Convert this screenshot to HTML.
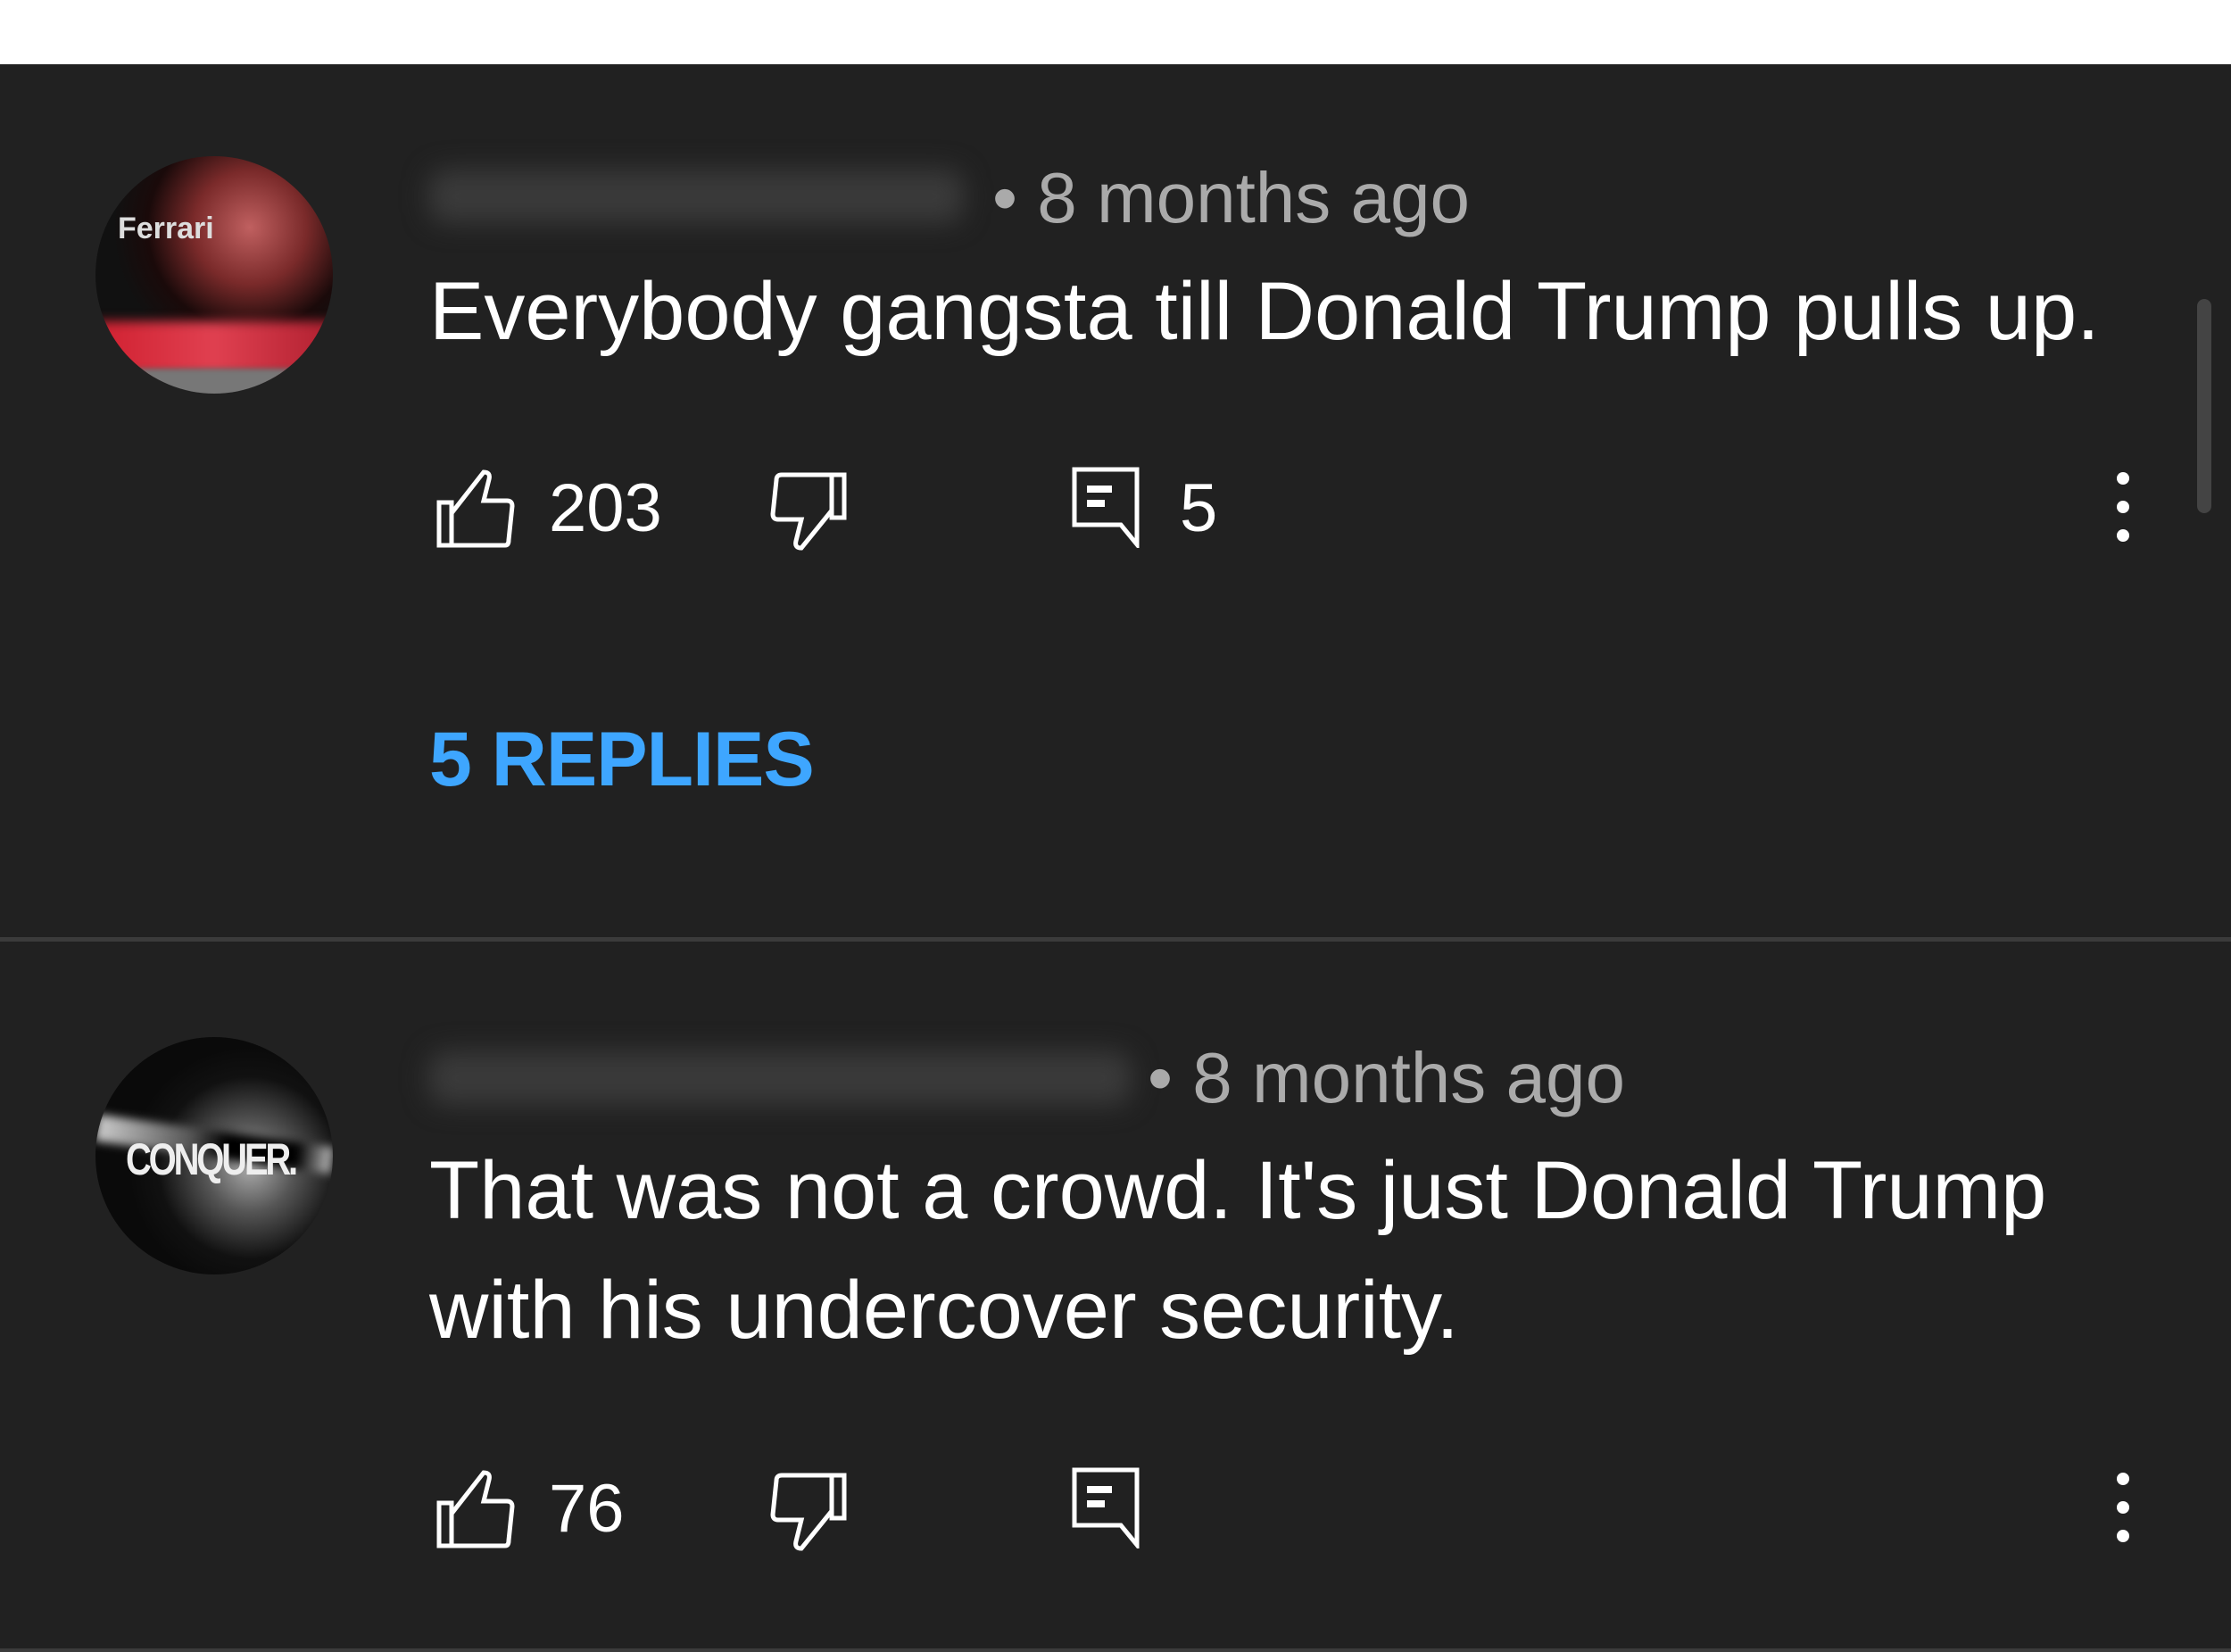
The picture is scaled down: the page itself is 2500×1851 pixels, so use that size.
<!DOCTYPE html>
<html><head><meta charset="utf-8"><style>
html,body{margin:0;padding:0}
body{width:2500px;height:1851px;background:#212121;position:relative;overflow:hidden;font-family:"Liberation Sans",Roboto,sans-serif}
.top{position:absolute;left:0;top:0;width:2500px;height:72px;background:#fff}
.abs{position:absolute;white-space:nowrap}
.blur{position:absolute;background:#3a3a3a;filter:blur(14px);border-radius:20px}
.date{color:#aaaaaa;font-size:80px;line-height:1}
.txt{color:#fff;font-size:92px;line-height:1}
.num{color:#fff;font-size:76px;line-height:1}
.av{position:absolute;width:266px;height:266px;border-radius:50%;overflow:hidden}
</style></head><body>
<div class="top"></div>

<div class="av" style="left:107px;top:175px;background:radial-gradient(circle at 65% 30%,#c06060 0,#7a2a2a 25%,#1a0a0a 45%,#111 60%);">
  <div style="position:absolute;left:0;top:185px;width:266px;height:60px;background:linear-gradient(90deg,#d02030,#e04050,#b02030);filter:blur(6px)"></div>
  <div style="position:absolute;left:0;top:238px;width:266px;height:40px;background:#777;filter:blur(3px)"></div>
  <div style="position:absolute;left:25px;top:62px;color:#ddd;font-size:34px;font-weight:bold">Ferrari</div>
</div>
<div class="blur" style="left:480px;top:190px;width:600px;height:60px"></div>
<div class="abs date" style="left:1112px;top:182px">• 8 months ago</div>
<div class="abs txt" style="left:481px;top:303px">Everybody gangsta till Donald Trump pulls up.</div>

<div style="position:absolute;left:2462px;top:335px;width:16px;height:240px;background:#444;border-radius:8px"></div>

<svg class="abs" style="left:488px;top:525px" width="92" height="90" viewBox="0 0 92 90" fill="none" stroke="#fff" stroke-width="5">
<rect x="4" y="38" width="14" height="48"/><path d="M18 86 H78 Q82 86 82 80 L86 42 Q86 36 80 36 H54 L60 12 Q62 4 54 4 L18 50"/></svg>
<div class="abs num" style="left:615px;top:532px">203</div>
<svg class="abs" style="left:862px;top:528px" width="92" height="90" viewBox="0 0 92 90" fill="none" stroke="#fff" stroke-width="5">
<rect x="70" y="4" width="14" height="48"/><path d="M70 4 H14 Q8 4 8 10 L4 48 Q4 54 10 54 H36 L30 78 Q28 86 36 86 L70 44"/></svg>
<svg class="abs" style="left:1200px;top:522px" width="80" height="92" viewBox="0 0 80 92" fill="none" stroke="#fff" stroke-width="5">
<path d="M4 4 H74 V88 L56 66 H4 Z"/><rect x="18" y="22" width="28" height="8" fill="#fff" stroke="none"/><rect x="18" y="38" width="20" height="8" fill="#fff" stroke="none"/></svg>
<div class="abs num" style="left:1322px;top:532px">5</div>
<svg class="abs" style="left:2364px;top:528px" width="30" height="80"><circle cx="15" cy="8" r="7" fill="#fff"/><circle cx="15" cy="40" r="7" fill="#fff"/><circle cx="15" cy="72" r="7" fill="#fff"/></svg>

<div class="abs" style="left:481px;top:808px;color:#3ea6ff;font-size:86px;line-height:1;font-weight:bold;letter-spacing:-1px">5 REPLIES</div>

<div style="position:absolute;left:0;top:1050px;width:2500px;height:5px;background:#3b3b3b"></div>

<div class="av" style="left:107px;top:1162px;background:radial-gradient(circle at 65% 55%,#aaa 0,#555 22%,#111 45%,#0a0a0a 60%);">
  <div style="position:absolute;left:0;top:105px;width:266px;height:30px;background:linear-gradient(90deg,#ccc,#555 40%,#000 55%,#000 85%,#bbb);filter:blur(5px);transform:rotate(8deg)"></div>
  <div style="position:absolute;left:34px;top:108px;color:#eee;font-size:50px;font-weight:bold;letter-spacing:-4px;transform:scaleX(.8);transform-origin:left">CONQUER.</div>
</div>
<div class="blur" style="left:480px;top:1178px;width:788px;height:60px"></div>
<div class="abs date" style="left:1286px;top:1168px">• 8 months ago</div>
<div class="abs txt" style="left:481px;top:1288px">That was not a crowd. It's just Donald Trump</div>
<div class="abs txt" style="left:481px;top:1422px">with his undercover security.</div>

<svg class="abs" style="left:488px;top:1646px" width="92" height="90" viewBox="0 0 92 90" fill="none" stroke="#fff" stroke-width="5">
<rect x="4" y="38" width="14" height="48"/><path d="M18 86 H78 Q82 86 82 80 L86 42 Q86 36 80 36 H54 L60 12 Q62 4 54 4 L18 50"/></svg>
<div class="abs num" style="left:615px;top:1653px">76</div>
<svg class="abs" style="left:862px;top:1649px" width="92" height="90" viewBox="0 0 92 90" fill="none" stroke="#fff" stroke-width="5">
<rect x="70" y="4" width="14" height="48"/><path d="M70 4 H14 Q8 4 8 10 L4 48 Q4 54 10 54 H36 L30 78 Q28 86 36 86 L70 44"/></svg>
<svg class="abs" style="left:1200px;top:1643px" width="80" height="92" viewBox="0 0 80 92" fill="none" stroke="#fff" stroke-width="5">
<path d="M4 4 H74 V88 L56 66 H4 Z"/><rect x="18" y="22" width="28" height="8" fill="#fff" stroke="none"/><rect x="18" y="38" width="20" height="8" fill="#fff" stroke="none"/></svg>
<svg class="abs" style="left:2364px;top:1649px" width="30" height="80"><circle cx="15" cy="8" r="7" fill="#fff"/><circle cx="15" cy="40" r="7" fill="#fff"/><circle cx="15" cy="72" r="7" fill="#fff"/></svg>

<div style="position:absolute;left:0;top:1847px;width:2500px;height:4px;background:#3b3b3b"></div>
</body></html>
